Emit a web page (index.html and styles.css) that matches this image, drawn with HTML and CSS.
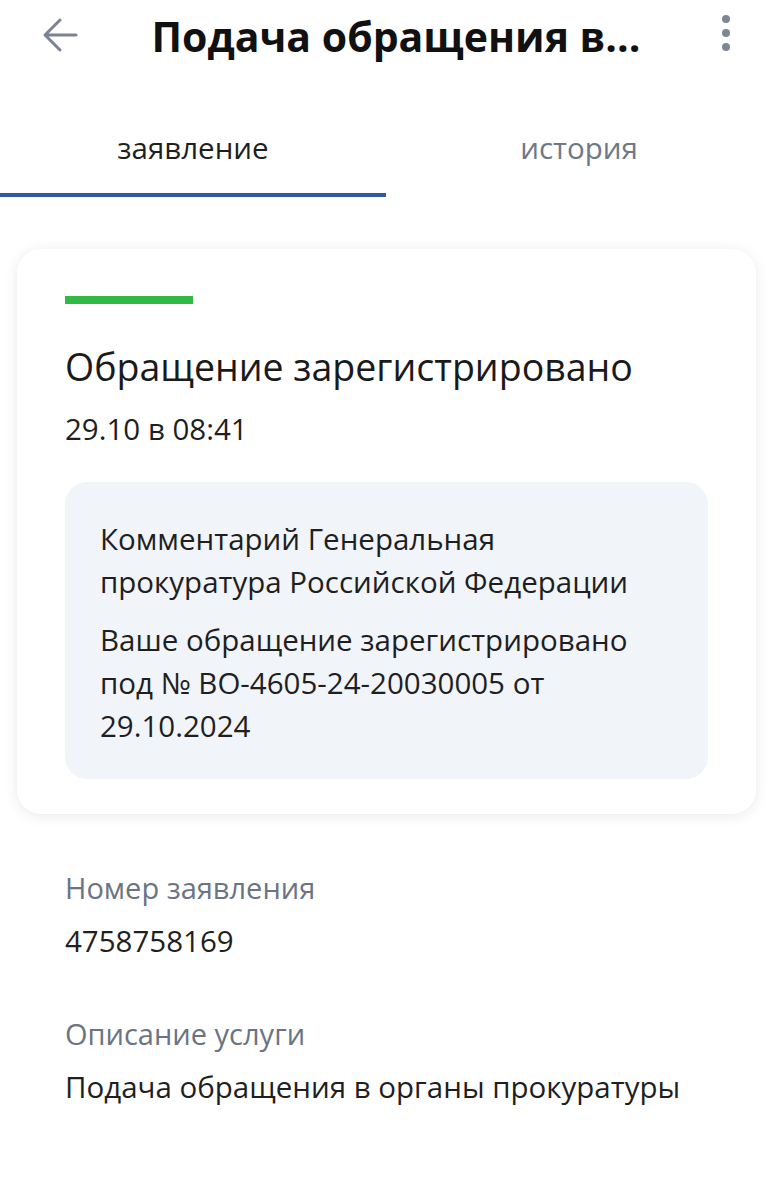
FILE: index.html
```html
<!DOCTYPE html>
<html lang="ru">
<head>
<meta charset="utf-8">
<link rel="stylesheet" href="styles.css">
</head>
<body>
<div class="page">
  <header class="topbar">
    <svg class="back" width="40" height="40" viewBox="0 0 40 40"><path d="M36 20H6M20 5L5 20L20 35" fill="none" stroke="#7b8494" stroke-width="3" stroke-linecap="round" stroke-linejoin="round"/></svg>
    <h1 class="title">Подача обращения в...</h1>
    <div class="kebab"><span></span><span></span><span></span></div>
  </header>
  <nav class="tabs">
    <div class="tab active">заявление</div>
    <div class="tab">история</div>
  </nav>
  <section class="card">
    <div class="status-bar"></div>
    <h2 class="status">Обращение зарегистрировано</h2>
    <div class="date">29.10 в 08:41</div>
    <div class="comment">
      <p>Комментарий Генеральная прокуратура Российской Федерации</p>
      <p>Ваше обращение зарегистрировано под № ВО-4605-24-20030005 от 29.10.2024</p>
    </div>
  </section>
  <section class="info">
    <div class="label">Номер заявления</div>
    <div class="value">4758758169</div>
    <div class="label second">Описание услуги</div>
    <div class="value">Подача обращения в органы прокуратуры</div>
  </section>
</div>
</body>
</html>
```
FILE: styles.css
```css
* { box-sizing: border-box; }
html, body { margin: 0; padding: 0; background: #ffffff; }
body { font-family: "Open Sans", "Noto Sans", sans-serif; color: #1f1f1f; }
.page { width: 773px; }
.topbar { display: flex; align-items: center; height: 72px; padding: 0 0 0 40px; }
.back { flex: none; margin-top: -2px; }
.title { flex: 1; margin: 0; text-align: center; font-size: 41px; font-weight: 700; color: #111; padding-left: 16px; line-height: 50px; white-space: nowrap; }
.kebab { flex: none; width: 60px; display: flex; flex-direction: column; align-items: center; gap: 6px; margin-right: 17px; margin-top: -6px; }
.kebab span { width: 8px; height: 8px; border-radius: 50%; background: #7d8694; }
.tabs { display: flex; margin-top: 58px; }
.tab { width: 386px; text-align: center; font-size: 29.5px; line-height: 36px; color: #6f7887; padding-bottom: 27px; border-bottom: 4px solid transparent; }
.tab.active { color: #1f1f1f; border-bottom-color: #2d5aa8; }
.card { margin: 52px 17px 0 17px; background: #fff; border-radius: 24px; box-shadow: 0 2px 14px rgba(0,0,0,0.09); padding: 47px 48px 35px 48px; }
.status-bar { width: 128px; height: 8px; background: #33b843; }
.status { margin: 41px 0 0 0; font-size: 37.5px; font-weight: 400; line-height: 44px; color: #1a1a1a; }
.date { margin-top: 22px; font-size: 29.5px; line-height: 36px; color: #1f1f1f; }
.comment { margin-top: 35px; background: #f1f4f9; border-radius: 22px; padding: 35px 35px 32px 35px; }
.comment p { margin: 0; font-size: 29.5px; line-height: 43px; color: #1f1f1f; }
.comment p + p { margin-top: 15px; }
.info { padding: 54px 65px 0 65px; }
.label { font-size: 29px; line-height: 40px; color: #6b7484; }
.value { margin-top: 13px; font-size: 29.5px; line-height: 40px; color: #1f1f1f; }
.label.second { margin-top: 53px; }
```
